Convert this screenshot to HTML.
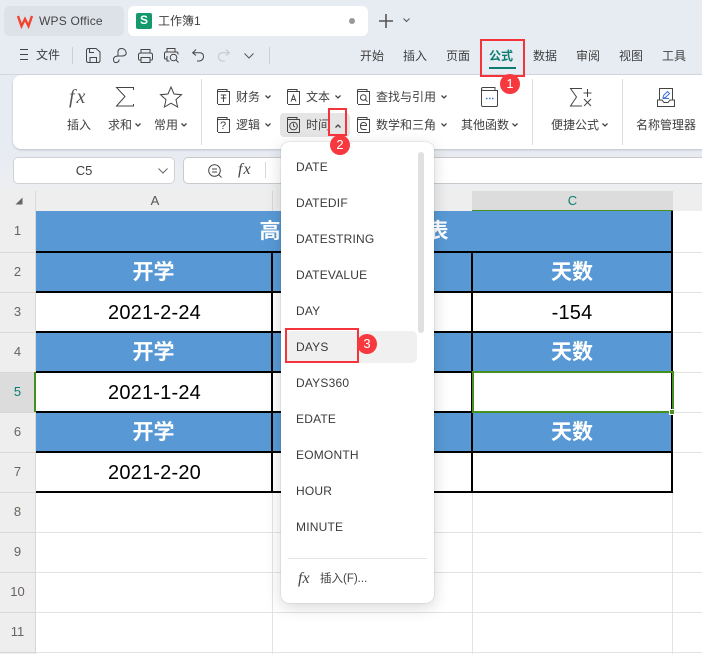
<!DOCTYPE html>
<html><head><meta charset="utf-8">
<style>
html,body{margin:0;padding:0}
body{width:702px;height:654px;position:relative;overflow:hidden;background:#fff;font-family:"Liberation Sans","Noto Sans CJK SC",sans-serif;color:#333}
.a{position:absolute}
.t{position:absolute;white-space:nowrap;font-size:12px;line-height:16px;color:#3f3f3f}
.c{text-align:center}
svg{position:absolute;overflow:visible;fill:none;stroke:#444;stroke-width:1}
.hl{position:absolute;background:#e3e3e3;height:1px}
.vl{position:absolute;background:#e3e3e3;width:1px}
.bl{position:absolute;background:#5899d5;left:36px;width:637px}
.k{position:absolute;background:#000}
.hd{position:absolute;color:#fff;font-size:21px;font-weight:bold;line-height:40px;text-align:center;white-space:nowrap;overflow:hidden}
.dt{position:absolute;color:#000;font-size:20px;line-height:40px;text-align:center;letter-spacing:.2px}
.rn{position:absolute;left:0;width:35px;text-align:center;font-size:13px;line-height:40px;color:#6b625c}
.mi{position:absolute;left:296px;font-size:12px;line-height:16px;color:#3a3a3a;letter-spacing:.2px}
.red{position:absolute;border:2.5px solid #f5333b;box-sizing:border-box}
.bd{position:absolute;width:20px;height:20px;border-radius:50%;background:#f7383f;color:#fff;font-size:13px;line-height:20px;text-align:center}
</style></head><body>

<!-- chrome -->
<div class="a" style="left:0;top:0;width:702px;height:191px;background:linear-gradient(180deg,#e7ebf2 0,#e7ebf2 150px,#eceef1 184px,#eee 191px)"></div>
<div class="a" style="left:4px;top:6px;width:120px;height:30px;background:#dde1e8;border-radius:6px"></div>
<div class="a" style="left:128px;top:6px;width:240px;height:30px;background:#fff;border-radius:6px"></div>
<svg style="left:17px;top:15px" width="16" height="12" viewBox="0 0 16 12"><path d="M1 1L4.500 11L8 4L11.500 11L15 1" stroke="#f0442f" stroke-width="2.400"/></svg>
<div class="t" style="left:39px;top:13px;color:#444;letter-spacing:.2px">WPS Office</div>
<div class="a" style="left:136px;top:13px;width:16px;height:16px;background:#14996b;border-radius:2px;color:#fff;font-size:12px;font-weight:bold;line-height:15px;text-align:center">S</div>
<div class="t" style="left:158px;top:13px">工作簿1</div>
<div class="a" style="left:349px;top:18px;width:6px;height:6px;border-radius:50%;background:#999"></div>
<svg style="left:379px;top:14px" width="14" height="14"><path d="M7 0V14M0 7H14" stroke="#555" stroke-width="1.600"/></svg>
<svg style="left:403px;top:18px" width="7" height="5"><path d="M.5 .5L3.500 3.500L6.500 .5" stroke="#555"/></svg>

<!-- quick bar -->
<svg style="left:20px;top:49px" width="8" height="11"><path d="M0 .5H8M0 5.500H8M0 10.500H8" stroke="#444"/></svg>
<div class="t" style="left:36px;top:47px">文件</div>
<div class="a" style="left:72px;top:47px;width:1px;height:17px;background:#ccd0d6"></div>
<svg style="left:86px;top:48px" width="15" height="15"><path d="M.5 2.500Q.5 .5 2.500 .5H10L14 4V12.500Q14 14.500 12 14.500H2.500Q.5 14.500 .5 12.500ZM4 14.500V9.500H10.500V14.500M3.500 .5V4.500H8"/></svg>
<svg style="left:113px;top:48px" width="14" height="15"><path d="M5 8V4Q5 .5 8.500 .5T13 4 9.500 8H5.500Q.5 8 .5 11.500T3.500 14.500 6 11.500"/></svg>
<svg style="left:138px;top:49px" width="15" height="14"><path d="M3 4V.5H12V4M3 11H1Q.5 11 .5 9V6Q.5 4 2.500 4H12.500Q14.500 4 14.500 6V9Q14.500 11 14 11H12M3 8.500H12V13.500H3Z"/></svg>
<svg style="left:164px;top:48px" width="15" height="15"><path d="M3 4V.5H11V4M3 11H1.500Q.5 11 .5 10V5.500Q.5 4 2 4H12.500Q14 4 14 5.500V6.500M3 8V13H5.500"/><circle cx="9.500" cy="9.500" r="3.300"/><path d="M12 12L14.500 14.500"/></svg>
<svg style="left:192px;top:49px" width="12" height="13"><path d="M4 .5L.7 3.800L4 6.500M1 3.800H7.500Q11.500 3.800 11.500 7.500T7.500 12H5"/></svg>
<svg style="left:218px;top:49px" width="12" height="13"><path d="M8 .5L11.300 3.800L8 6.500M11 3.800H4.500Q.5 3.800 .5 7.500T4.500 12H7" stroke="#c4c7cc"/></svg>
<svg style="left:244px;top:53px" width="10" height="6"><path d="M.5 .5L5 5L9.500 .5" stroke="#555"/></svg>
<div class="a" style="left:269px;top:47px;width:1px;height:17px;background:#ccd0d6"></div>

<div class="t" style="left:360px;top:48px">开始</div>
<div class="t" style="left:403px;top:48px">插入</div>
<div class="t" style="left:446px;top:48px">页面</div>
<div class="t" style="left:489px;top:48px;color:#0a7d70;font-weight:bold">公式</div>
<div class="a" style="left:489px;top:67px;width:27px;height:2px;background:#0a7d70"></div>
<div class="t" style="left:533px;top:48px">数据</div>
<div class="t" style="left:576px;top:48px">审阅</div>
<div class="t" style="left:619px;top:48px">视图</div>
<div class="t" style="left:662px;top:48px">工具</div>
<div class="a" style="left:0;top:74px;width:702px;height:1px;background:#d4d8de"></div>

<!-- ribbon -->
<div class="a" style="left:13px;top:75px;width:700px;height:74px;background:#fff;border-radius:8px;box-shadow:0 1px 2px rgba(0,0,0,.18)"></div>
<div class="a" style="left:201px;top:79px;width:1px;height:66px;background:#dcdcdc"></div>
<div class="a" style="left:532px;top:79px;width:1px;height:66px;background:#dcdcdc"></div>
<div class="a" style="left:622px;top:79px;width:1px;height:66px;background:#dcdcdc"></div>

<div class="t" style="left:69px;top:85px;font-family:'Liberation Serif',serif;font-style:italic;font-size:20px;line-height:24px;color:#555;letter-spacing:2px">fx</div>
<svg style="left:116px;top:87px" width="18" height="20"><path d="M17.500 3V.5H.5L9 9.500L.5 19H17.500V17"/></svg>
<svg style="left:159px;top:86px" width="24" height="22"><path d="M12 1L15 8L22.500 8.700L17 13.600L18.600 21L12 17.200L5.400 21L7 13.600L1.500 8.700L9 8Z"/></svg>
<div class="t" style="left:67px;top:117px">插入</div>
<div class="t" style="left:108px;top:117px">求和</div>
<div class="t" style="left:154px;top:117px">常用</div>
<svg style="left:135px;top:123px" width="6" height="4"><path d="M.5 .5L3 3L5.500 .5" stroke-width="1.300"/></svg>
<svg style="left:181px;top:123px" width="6" height="4"><path d="M.5 .5L3 3L5.500 .5" stroke-width="1.300"/></svg>

<div class="a" style="left:280px;top:113px;width:70px;height:24px;background:#e5e5e5;border-radius:4px"></div>

<svg style="left:217px;top:89px" width="13" height="16"><path d="M1 15.500H12Q12.500 15.500 12.500 15V2.500H1.500Q.5 2.500 .5 1.500T1.500 .5H10V2.500M.5 1.500V15M3.800 6H9.200M6.500 6V13M3.800 9H9.200"/></svg>
<div class="t" style="left:236px;top:89px">财务</div>
<svg style="left:265px;top:95px" width="6" height="4"><path d="M.5 .5L3 3L5.500 .5" stroke-width="1.300"/></svg>
<svg style="left:287px;top:89px" width="13" height="16"><path d="M1 15.500H12Q12.500 15.500 12.500 15V2.500H1.500Q.5 2.500 .5 1.500T1.500 .5H10V2.500M.5 1.500V15M4 12.500L6.500 6L9 12.500M5 10.500H8"/></svg>
<div class="t" style="left:306px;top:89px">文本</div>
<svg style="left:335px;top:95px" width="6" height="4"><path d="M.5 .5L3 3L5.500 .5" stroke-width="1.300"/></svg>
<svg style="left:357px;top:89px" width="13" height="16"><path d="M1 15.500H12Q12.500 15.500 12.500 15V2.500H1.500Q.5 2.500 .5 1.500T1.500 .5H10V2.500M.5 1.500V15"/><circle cx="6.300" cy="8.500" r="2.800"/><path d="M8.300 10.500L10.500 12.700"/></svg>
<div class="t" style="left:376px;top:89px">查找与引用</div>
<svg style="left:441px;top:95px" width="6" height="4"><path d="M.5 .5L3 3L5.500 .5" stroke-width="1.300"/></svg>

<svg style="left:217px;top:117px" width="13" height="16"><path d="M1 15.500H12Q12.500 15.500 12.500 15V2.500H1.500Q.5 2.500 .5 1.500T1.500 .5H10V2.500M.5 1.500V15"/></svg>
<div class="t" style="left:220px;top:120px;font-size:11px;line-height:13px">?</div>
<div class="t" style="left:236px;top:117px">逻辑</div>
<svg style="left:265px;top:123px" width="6" height="4"><path d="M.5 .5L3 3L5.500 .5" stroke-width="1.300"/></svg>
<svg style="left:287px;top:117px" width="13" height="16"><path d="M1 15.500H12Q12.500 15.500 12.500 15V2.500H1.500Q.5 2.500 .5 1.500T1.500 .5H10V2.500M.5 1.500V15M6.500 6.500V9L8 10"/><circle cx="6.500" cy="9" r="3.800"/></svg>
<div class="t" style="left:306px;top:117px">时间</div>
<svg style="left:335px;top:124px" width="6" height="4"><path d="M.5 3.500L3 1L5.500 3.500" stroke-width="1.300"/></svg>
<svg style="left:357px;top:117px" width="13" height="16"><path d="M1 15.500H12Q12.500 15.500 12.500 15V2.500H1.500Q.5 2.500 .5 1.500T1.500 .5H10V2.500M.5 1.500V15M3.500 8.500H9.500Q9.500 5.500 6.500 5.500T3.500 9T6.500 12.500H9.500"/></svg>
<div class="t" style="left:376px;top:117px">数学和三角</div>
<svg style="left:441px;top:123px" width="6" height="4"><path d="M.5 .5L3 3L5.500 .5" stroke-width="1.300"/></svg>

<svg style="left:481px;top:87px" width="17" height="20"><path d="M.5 5V18Q.5 19.500 2 19.500H15Q16.500 19.500 16.500 18V3.500H2Q.5 3.500 .5 2T2 .5H14V3.500M.5 2V5"/><path d="M5 11.500H6.500M8 11.500H9.500M11 11.500H12.500" stroke="#3f6fdc" stroke-width="1.500"/></svg>
<div class="t" style="left:461px;top:117px">其他函数</div>
<svg style="left:512px;top:123px" width="6" height="4"><path d="M.5 .5L3 3L5.500 .5" stroke-width="1.300"/></svg>

<svg style="left:570px;top:88px" width="22" height="20"><path d="M12 .5H.5L6.500 9L.5 18H12M17.500 1V9M13.500 5H21.500M14 11L21 18M21 11L14 18"/></svg>
<div class="t" style="left:551px;top:117px">便捷公式</div>
<svg style="left:602px;top:123px" width="6" height="4"><path d="M.5 .5L3 3L5.500 .5" stroke-width="1.300"/></svg>

<svg style="left:657px;top:88px" width="18" height="20"><path d="M2.500 12V.5H15.500V12M.5 12V18.500H17.500V12H13L11 14.500H7L5 12Z"/><path d="M6 10L6.500 7.500L10.500 3.500L12.500 5.500L8.500 9.500ZM6 10.500H12" stroke="#3f6fdc"/></svg>
<div class="t" style="left:636px;top:117px">名称管理器</div>

<!-- formula bar -->
<div class="a" style="left:13px;top:157px;width:160px;height:25px;background:#fff;border:1px solid #cfd1d5;border-radius:5px"></div>
<div class="t" style="left:14px;top:163px;width:140px;text-align:center;font-size:13px">C5</div>
<svg style="left:158px;top:168px" width="10" height="6"><path d="M.5 .5L5 5L9.500 .5" stroke="#666"/></svg>
<div class="a" style="left:183px;top:157px;width:530px;height:25px;background:#fff;border:1px solid #cacaca;border-radius:5px"></div>
<svg style="left:208px;top:164px" width="14" height="14"><circle cx="6.500" cy="6.500" r="5.800"/><path d="M4 5H9M4 8H9M10.700 10.700L13.500 13.500"/></svg>
<div class="t" style="left:238px;top:160px;font-family:'Liberation Serif',serif;font-style:italic;font-size:16px;line-height:20px;color:#444;letter-spacing:1px">fx</div>
<div class="a" style="left:265px;top:162px;width:1px;height:16px;background:#d8d8d8"></div>

<!-- sheet headers -->
<div class="a" style="left:0;top:191px;width:702px;height:20px;background:#eee"></div>
<div class="a" style="left:0;top:191px;width:35px;height:463px;background:#eee"></div>
<div class="a" style="left:35px;top:191px;width:1px;height:463px;background:#d8d8d8"></div>
<div class="a" style="left:472px;top:191px;width:201px;height:20px;background:#dcdcdc"></div>
<div class="a" style="left:472px;top:210px;width:201px;height:2px;background:#44911f"></div>
<div class="a" style="left:0;top:372px;width:35px;height:40px;background:#dcdcdc"></div>
<div class="vl" style="left:272px;top:191px;height:20px;background:#d8d8d8"></div>
<div class="t c" style="left:37px;top:193px;width:236px;color:#555;font-size:13px">A</div>
<div class="t c" style="left:472px;top:193px;width:201px;color:#0a7d70;font-size:13px">C</div>
<svg style="left:15px;top:197px" width="8" height="8"><path d="M7.500 .5V7.500H.5Z" fill="#666" stroke="none"/></svg>

<!-- grid -->
<div class="hl" style="left:673px;top:252px;width:29px"></div>
<div class="hl" style="left:673px;top:292px;width:29px"></div>
<div class="hl" style="left:673px;top:332px;width:29px"></div>
<div class="hl" style="left:673px;top:372px;width:29px"></div>
<div class="hl" style="left:673px;top:412px;width:29px"></div>
<div class="hl" style="left:673px;top:452px;width:29px"></div>
<div class="hl" style="left:36px;top:532px;width:666px"></div>
<div class="hl" style="left:36px;top:572px;width:666px"></div>
<div class="hl" style="left:36px;top:612px;width:666px"></div>
<div class="hl" style="left:36px;top:652px;width:666px"></div>
<div class="vl" style="left:272px;top:492px;height:162px"></div>
<div class="vl" style="left:472px;top:492px;height:162px"></div>
<div class="vl" style="left:672px;top:492px;height:162px"></div>
<div class="hl" style="left:0;top:252px;width:35px;background:#d8d8d8"></div>
<div class="hl" style="left:0;top:292px;width:35px;background:#d8d8d8"></div>
<div class="hl" style="left:0;top:332px;width:35px;background:#d8d8d8"></div>
<div class="hl" style="left:0;top:372px;width:35px;background:#d8d8d8"></div>
<div class="hl" style="left:0;top:412px;width:35px;background:#d8d8d8"></div>
<div class="hl" style="left:0;top:452px;width:35px;background:#d8d8d8"></div>
<div class="hl" style="left:0;top:492px;width:35px;background:#d8d8d8"></div>
<div class="hl" style="left:0;top:532px;width:35px;background:#d8d8d8"></div>
<div class="hl" style="left:0;top:572px;width:35px;background:#d8d8d8"></div>
<div class="hl" style="left:0;top:612px;width:35px;background:#d8d8d8"></div>
<div class="hl" style="left:0;top:652px;width:35px;background:#d8d8d8"></div>

<div class="rn" style="top:211px;height:41px">1</div>
<div class="rn" style="top:252px">2</div>
<div class="rn" style="top:292px">3</div>
<div class="rn" style="top:332px">4</div>
<div class="rn" style="top:372px;color:#0a7d70">5</div>
<div class="rn" style="top:412px">6</div>
<div class="rn" style="top:452px">7</div>
<div class="rn" style="top:492px">8</div>
<div class="rn" style="top:532px">9</div>
<div class="rn" style="top:572px">10</div>
<div class="rn" style="top:612px">11</div>

<!-- table -->
<div class="bl" style="top:211px;height:41px"></div>
<div class="bl" style="top:252px;height:40px"></div>
<div class="bl" style="top:332px;height:40px"></div>
<div class="bl" style="top:412px;height:40px"></div>
<div class="k" style="left:36px;top:251px;width:637px;height:2px"></div>
<div class="k" style="left:36px;top:291px;width:637px;height:2px"></div>
<div class="k" style="left:36px;top:331px;width:637px;height:2px"></div>
<div class="k" style="left:36px;top:371px;width:637px;height:2px"></div>
<div class="k" style="left:36px;top:411px;width:637px;height:2px"></div>
<div class="k" style="left:36px;top:451px;width:637px;height:2px"></div>
<div class="k" style="left:36px;top:491px;width:637px;height:2px"></div>
<div class="k" style="left:271px;top:252px;width:2px;height:241px"></div>
<div class="k" style="left:471px;top:252px;width:2px;height:241px"></div>
<div class="k" style="left:671px;top:211px;width:2px;height:282px"></div>

<div class="hd" style="left:36px;top:212px;width:636px">高考开学倒计时间表</div>
<div class="hd" style="left:36px;top:253px;width:235px">开学</div>
<div class="hd" style="left:473px;top:253px;width:198px">天数</div>
<div class="hd" style="left:36px;top:333px;width:235px">开学</div>
<div class="hd" style="left:473px;top:333px;width:198px">天数</div>
<div class="hd" style="left:36px;top:413px;width:235px">开学</div>
<div class="hd" style="left:473px;top:413px;width:198px">天数</div>
<div class="dt" style="left:37px;top:293px;width:235px">2021-2-24</div>
<div class="dt" style="left:473px;top:293px;width:198px">-154</div>
<div class="dt" style="left:37px;top:373px;width:235px">2021-1-24</div>
<div class="dt" style="left:37px;top:453px;width:235px">2021-2-20</div>

<!-- selection -->
<div class="a" style="left:34px;top:372px;width:2px;height:40px;background:#44911f"></div>
<div class="a" style="left:472px;top:371px;width:202px;height:42px;border:2px solid #44911f;box-sizing:border-box"></div>
<div class="a" style="left:669px;top:409px;width:6px;height:6px;background:#44911f;border:1px solid #fff;box-sizing:border-box"></div>

<!-- dropdown -->
<div class="a" style="left:281px;top:142px;width:153px;height:461px;background:#fff;border-radius:8px;box-shadow:0 0 1px rgba(0,0,0,.35),0 4px 16px rgba(0,0,0,.16)"></div>
<div class="a" style="left:418px;top:152px;width:6px;height:181px;background:#e0e0e0;border-radius:3px"></div>
<div class="a" style="left:286px;top:331px;width:131px;height:32px;background:#f0f0f0;border-radius:5px"></div>
<div class="mi" style="top:159px">DATE</div>
<div class="mi" style="top:195px">DATEDIF</div>
<div class="mi" style="top:231px">DATESTRING</div>
<div class="mi" style="top:267px">DATEVALUE</div>
<div class="mi" style="top:303px">DAY</div>
<div class="mi" style="top:339px">DAYS</div>
<div class="mi" style="top:375px">DAYS360</div>
<div class="mi" style="top:411px">EDATE</div>
<div class="mi" style="top:447px">EOMONTH</div>
<div class="mi" style="top:483px">HOUR</div>
<div class="mi" style="top:519px">MINUTE</div>
<div class="a" style="left:288px;top:558px;width:139px;height:1px;background:#e4e4e4"></div>
<div class="t" style="left:298px;top:569px;font-family:'Liberation Serif',serif;font-style:italic;font-size:16px;line-height:20px;color:#444">fx</div>
<div class="t" style="left:320px;top:571px;font-size:11.500px">插入(F)...</div>

<!-- annotations -->
<div class="red" style="left:480px;top:39px;width:45px;height:38px"></div>
<div class="bd" style="left:500px;top:74px">1</div>
<div class="red" style="left:328px;top:108px;width:19px;height:28px"></div>
<div class="bd" style="left:330px;top:135px">2</div>
<div class="red" style="left:285px;top:328px;width:74px;height:35px"></div>
<div class="bd" style="left:357px;top:334px">3</div>
</body></html>
